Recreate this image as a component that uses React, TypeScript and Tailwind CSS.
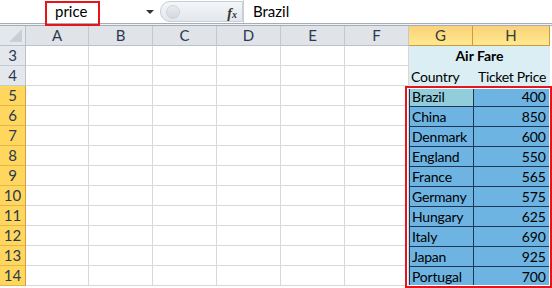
import React from "react";

const cols = ["A", "B", "C", "D", "E", "F", "G", "H"];
const colW = [63, 64, 64, 64, 64, 64, 64, 77];
const data: [string, number][] = [
  ["Brazil", 400],
  ["China", 850],
  ["Denmark", 600],
  ["England", 550],
  ["France", 565],
  ["Germany", 575],
  ["Hungary", 625],
  ["Italy", 690],
  ["Japan", 925],
  ["Portugal", 700],
];

function RowHeader({ n, sel }: { n: number; sel: boolean }) {
  return (
    <div
      className={
        "w-[26px] h-[20px] shrink-0 flex items-center justify-center text-[15px] border-b border-r " +
        (sel
          ? "bg-[#ffd75e] border-b-[#e3b54a] border-r-[#d89a3a] text-[#2a3a50]"
          : "bg-[#e4e7ec] border-b-[#c6ccd4] border-r-[#b9c1cb] text-[#2a3a50]")
      }
    >
      {n}
    </div>
  );
}

function EmptyCells() {
  return (
    <>
      {colW.slice(0, 6).map((w, i) => (
        <div
          key={i}
          className="h-[20px] shrink-0 border-r border-b border-[#d8d8d8]"
          style={{ width: w }}
        />
      ))}
    </>
  );
}

export default function App() {
  return (
    <div
      className="relative w-[552px] h-[288px] overflow-hidden bg-white text-black"
      style={{ fontFamily: "Lato, 'Open Sans', sans-serif" }}
    >
      {/* formula bar */}
      <div className="h-[23px] flex items-stretch bg-white">
        <div className="w-[140px] shrink-0 flex items-center pl-[55px] text-[15px] text-black">
          price
        </div>
        <div className="w-[20px] shrink-0 flex items-center justify-center">
          <div className="w-0 h-0 border-l-[4px] border-r-[4px] border-t-[4px] border-l-transparent border-r-transparent border-t-[#333]" />
        </div>
        <div className="w-[83px] shrink-0 my-[1px] flex items-center rounded-l-[10px] border border-[#c8ced6] bg-gradient-to-b from-[#f4f6f8] to-[#e3e7ec] relative">
          <div className="ml-[5px] w-[14px] h-[14px] rounded-full bg-gradient-to-b from-[#e8ebee] to-[#d4d8dd] border border-[#d0d4d9]" />
          <span
            className="absolute right-[5px] top-[1px] text-[14px] italic font-bold text-[#333]"
            style={{ fontFamily: "'Liberation Serif', serif" }}
          >
            f<span className="text-[10px]">x</span>
          </span>
        </div>
        <div className="w-px bg-[#c8ced6] shrink-0" />
        <div className="flex-1 flex items-center pl-[9px] text-[15px] text-black">
          Brazil
        </div>
      </div>
      <div className="h-px bg-[#a6adb6]" />
      <div className="h-[1px] bg-[#eef0f3]" />
      <div className="h-px bg-[#a6adb6]" />

      {/* column headers */}
      <div className="flex h-[20px]">
        <div className="w-[26px] shrink-0 relative bg-[#e4e7ec] border-r border-b border-[#b9c1cb]">
          <div
            className="absolute right-[3px] bottom-[3px] w-[13px] h-[13px] bg-[#c9ced5]"
            style={{ clipPath: "polygon(100% 0, 100% 100%, 0 100%)" }}
          />
        </div>
        {cols.map((c, i) => {
          const sel = c === "G" || c === "H";
          return (
            <div
              key={c}
              style={{ width: colW[i] }}
              className={
                "shrink-0 flex items-center justify-center text-[15px] border-r border-b " +
                (sel
                  ? "bg-gradient-to-b from-[#f9d27a] to-[#ffe98e] border-[#d09b3a] text-[#3a3a3a]"
                  : "bg-[#e0e3e8] border-r-[#c3c9d1] border-b-[#b9c1cb] text-[#2a3a50]")
              }
            >
              {c}
            </div>
          );
        })}
      </div>

      {/* row 3 */}
      <div className="flex">
        <RowHeader n={3} sel={false} />
        <EmptyCells />
        <div className="w-[141px] h-[20px] shrink-0 bg-[#daeef3] flex items-center justify-center font-bold text-[14px] whitespace-nowrap border-b border-[#daeef3]">
          Air Fare
        </div>
      </div>
      {/* row 4 */}
      <div className="flex">
        <RowHeader n={4} sel={false} />
        <EmptyCells />
        <div className="w-[64px] h-[20px] shrink-0 bg-[#daeef3] flex items-center pl-[2px] text-[14px] whitespace-nowrap tracking-[-0.2px]">
          Country
        </div>
        <div className="w-[77px] h-[20px] shrink-0 bg-[#daeef3] flex items-center justify-end pr-[4px] text-[14px] whitespace-nowrap tracking-[-0.3px]">
          Ticket Price
        </div>
      </div>
      {/* data rows */}
      {data.map(([country, price], i) => (
        <div className="flex" key={country}>
          <RowHeader n={i + 5} sel={true} />
          <EmptyCells />
          <div
            className={
              "w-[64px] h-[20px] shrink-0 flex items-center pl-[2px] text-[14px] whitespace-nowrap tracking-[-0.2px] border-l border-t border-[#1f3656] " +
              (i === 0 ? "bg-[#92cddc]" : "bg-[#6db4e2]")
            }
          >
            {country}
          </div>
          <div className="w-[77px] h-[20px] shrink-0 flex items-center justify-end pr-[3px] text-[14px] border-l border-r border-t border-[#1f3656] bg-[#6db4e2]">
            {price}
          </div>
        </div>
      ))}

      {/* annotations */}
      <div className="absolute left-[45px] top-[1px] w-[55px] h-[25px] border-2 border-[#e8141b]" />
      <div className="absolute left-[405px] top-[86px] w-[147px] h-[202px] border-2 border-[#e8141b]">
        <div className="w-full h-full border border-white" />
      </div>
    </div>
  );
}
